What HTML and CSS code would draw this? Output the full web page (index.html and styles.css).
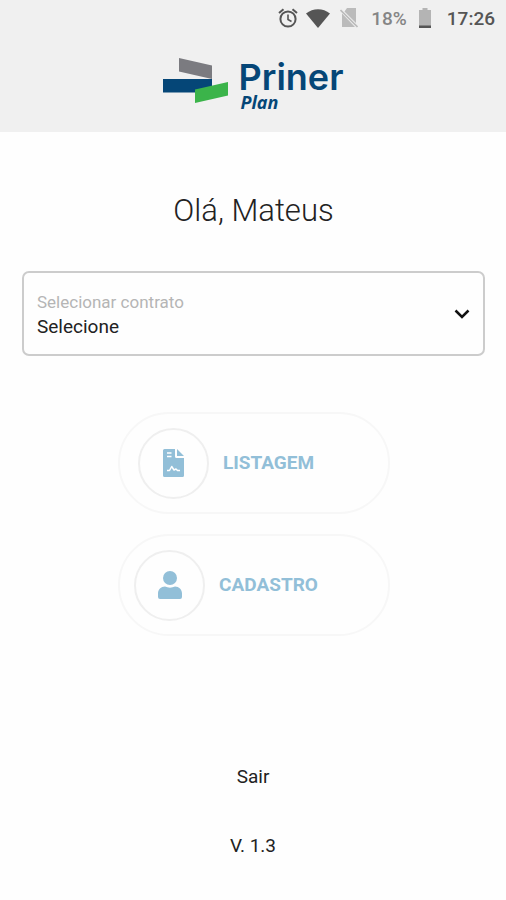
FILE: index.html
```html
<!DOCTYPE html>
<html lang="pt-BR">

    <head>
        <meta charset="utf-8">
        <meta name="viewport" content="width=device-width, initial-scale=1">
        <title>Priner Plan</title>
        <link rel="stylesheet" href="styles.css">
    </head>

    <body>
        <header class="header">
            <div class="status">
                <svg class="status-alarm" viewBox="0 0 20 20" width="20" height="20" fill="none" stroke="currentColor" stroke-width="2" aria-hidden="true">
                    <circle cx="10" cy="11" r="7.6" />
                    <path d="M10 6.5v5l3.5 2" stroke-width="1.6" />
                    <path d="M1 5l4.5-3.8M19 5l-4.5-3.8" />
                </svg>
                <svg class="status-wifi" viewBox="0 0 24 19" width="24" height="19" aria-hidden="true">
                    <path d="M0 4.5C7-1.3 17-1.3 24 4.5L12 19z" fill="currentColor" />
                </svg>
                <svg class="status-sim" viewBox="0 0 18 20" width="18" height="20" aria-hidden="true">
                    <path d="M7 0h9v15L4.500 3.500zM2 5.500L15 19H2z" fill="currentColor" />
                    <path d="M.5 2L17.500 19" stroke="currentColor" stroke-width="1.600" />
                </svg>
                <span class="status-percent">18%</span>
                <svg class="status-battery" viewBox="0 0 12 20" width="12" height="20" aria-hidden="true">
                    <path d="M3.500 0h5v2H12v18H0V2h3.500z" fill="#b4b4b4" />
                    <path d="M0 17.500h12V20H0z" fill="#555" />
                </svg>
                <time class="status-time">17:26</time>
            </div>
            <div class="logo">
                <svg class="logo-mark" viewBox="0 0 65 46" width="65" height="46" aria-hidden="true">
                    <path d="M16 0l33 7.500V21L16 13.500z" fill="#7b7b80" />
                    <path d="M0 21h49v13.500H0z" fill="#054677" />
                    <path d="M32 31.500l33-7.500v13.500L32 45z" fill="#3bb44a" />
                </svg>
                <div class="logo-text">
                    <span class="logo-name">Priner</span>
                    <span class="logo-product">Plan</span>
                </div>
            </div>
        </header>

        <main class="main">
            <h1 class="greeting">Olá, Mateus</h1>

            <div class="field">
                <label class="field-label" for="contrato">Selecionar contrato</label>
                <select class="field-select" id="contrato">
                    <option>Selecione</option>
                </select>
                <svg class="field-arrow" viewBox="0 0 16 10" width="16" height="10" fill="none" stroke="#111" stroke-width="2.500" aria-hidden="true">
                    <path d="M1.500 1.500L8 8l6.500-6.500" />
                </svg>
            </div>

            <div class="actions">
                <button class="action" type="button">
                    <span class="action-icon">
                        <svg viewBox="0 0 21 28" width="21" height="28" aria-hidden="true">
                            <path d="M1.500 0H12v7.500a1.500 1.500 0 0 0 1.500 1.500H21v17.500a1.500 1.500 0 0 1-1.500 1.500h-18A1.500 1.500 0 0 1 0 26.500v-25A1.500 1.500 0 0 1 1.500 0zM14 0l7 7h-7z" fill="currentColor" />
                            <path d="M4 4h4.500M4 7.500h4.500M4 21.500h2.500l2.200-4 2.300 3.500 2-1 1.500 1.500H17" fill="none" stroke="#fff" stroke-width="1.500" stroke-linejoin="round" />
                        </svg>
                    </span>
                    LISTAGEM
                </button>
                <button class="action" type="button">
                    <span class="action-icon">
                        <svg viewBox="0 0 24 28" width="24" height="28" fill="currentColor" aria-hidden="true">
                            <circle cx="12" cy="7" r="7" />
                            <path d="M7 15.500c3 1.500 7 1.500 10 0 4 0 7 3 7 7V26a2 2 0 0 1-2 2H2a2 2 0 0 1-2-2v-3.500c0-4 3-7 7-7z" />
                        </svg>
                    </span>
                    CADASTRO
                </button>
            </div>
        </main>

        <footer class="footer">
            <a class="logout" href="#">Sair</a>
            <span>V. 1.3</span>
        </footer>
    </body>

</html>
```
FILE: styles.css
```css
:root {
    --bar: #f0f0f0;
    --navy: #054677;
    --action: #92bfd8;
    --text: #222;
}

* {
    box-sizing: border-box;
}

body {
    margin: 0;
    background: #fefefe;
    color: var(--text);
    font-family: Roboto, "Liberation Sans", sans-serif;
    font-size: 19px;
}

.header {
    padding-bottom: 24px;
    background: var(--bar);
}

.status {
    display: flex;
    align-items: center;
    justify-content: flex-end;
    height: 36px;
    padding-right: 11px;
    color: #555;
    font-weight: 500;
}

.status-alarm {
    margin-right: 8px;
}

.status-wifi {
    margin-right: 10px;
}

.status-sim {
    margin-right: 13px;
    color: #bbb;
}

.status-percent {
    margin-right: 12px;
    color: #858585;
}

.status-battery {
    margin-right: 16px;
}

.logo {
    display: flex;
    justify-content: center;
    gap: 11px;
    padding-top: 22px;
}

.logo-text {
    display: flex;
    flex-direction: column;
    color: var(--navy);
}

.logo-name {
    font: 600 36px/38px Inter, "DejaVu Sans", sans-serif;
}

.logo-product {
    padding-left: 2px;
    font: italic 700 18px/12px "Open Sans", "Noto Sans", sans-serif;
}

.main {
    padding: 60px 21px 0 22px;
}

.greeting {
    margin: 0 0 41px;
    font-size: 31px;
    font-weight: 300;
    line-height: 38px;
    text-align: center;
}

.field {
    position: relative;
    border: 2px solid #ccc;
    border-radius: 7px;
}

.field-label {
    position: absolute;
    top: 18px;
    left: 13px;
    color: #b5b5b5;
    font-size: 17px;
    line-height: 22px;
    pointer-events: none;
}

.field-select {
    display: block;
    width: 100%;
    padding: 42px 40px 15px 13px;
    border: 0;
    border-radius: 5px;
    background: transparent;
    color: var(--text);
    font: 19px/24px Roboto, "Liberation Sans", sans-serif;
    appearance: none;
}

.field-arrow {
    position: absolute;
    top: 36px;
    right: 13px;
    pointer-events: none;
}

.actions {
    display: flex;
    flex-direction: column;
    align-items: center;
    gap: 20px;
    margin-top: 56px;
}

.action {
    display: flex;
    align-items: center;
    justify-content: center;
    gap: 14px;
    width: 272px;
    height: 102px;
    padding: 0 55px 0 0;
    border: 2px solid #f7f7f7;
    border-radius: 51px;
    background: transparent;
    color: var(--action);
    font: 700 19px/24px Roboto, "Liberation Sans", sans-serif;
    cursor: pointer;
}

.action-icon {
    display: grid;
    place-items: center;
    width: 71px;
    height: 71px;
    border: 2px solid #efefef;
    border-radius: 50%;
}

.footer {
    display: flex;
    flex-direction: column;
    align-items: center;
    gap: 45px;
    padding: 129px 0 42px;
    line-height: 24px;
}

.logout {
    color: inherit;
    text-decoration: none;
}
```
